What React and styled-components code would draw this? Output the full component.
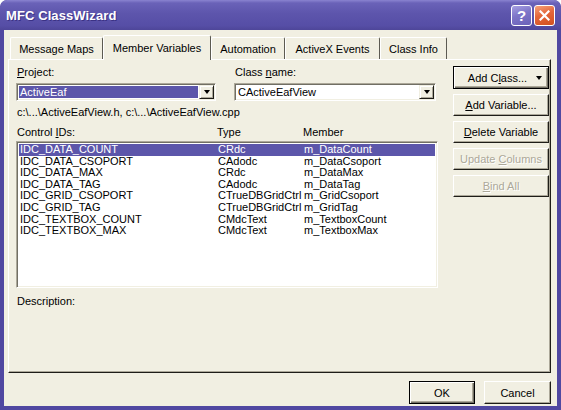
import React from "react";
import styled, { createGlobalStyle } from "styled-components";

const GlobalStyle = createGlobalStyle`
  html, body {
    margin: 0;
    padding: 0;
    background: #ffffff;
  }
  body {
    font-family: "Liberation Sans", Arial, sans-serif;
    font-size: 11px;
    color: #000;
  }
`;

const Window = styled.div`
  width: 561px;
  height: 410px;
  box-sizing: border-box;
  display: flex;
  flex-direction: column;
  padding: 0 4px 5px 4px;
  background: #5048a1;
  border-radius: 7px 7px 0 0;
  overflow: hidden;
`;

const TitleBar = styled.div`
  height: 30px;
  flex: none;
  margin: 0 -4px;
  padding: 0 6px 0 6px;
  display: flex;
  align-items: center;
  background: linear-gradient(
    180deg,
    #8a83d0 0%,
    #6a62b8 10%,
    #5d55ac 45%,
    #564ea6 85%,
    #4e4699 100%
  );
  border-radius: 7px 7px 0 0;
`;

const Title = styled.div`
  flex: 1;
  color: #fff;
  font-weight: bold;
  font-size: 13px;
  letter-spacing: 0.1px;
  text-shadow: 1px 1px 0 #3b3285;
`;

const CaptionButton = styled.div`
  width: 21px;
  height: 21px;
  box-sizing: border-box;
  margin-left: 2px;
  border: 1px solid #fff;
  border-radius: 3px;
  display: flex;
  align-items: center;
  justify-content: center;
  color: #fff;
  font-weight: bold;
  font-size: 15px;
  background: ${(p) =>
    p.$close
      ? "linear-gradient(160deg, #f6a27a 0%, #e4663a 45%, #d2501f 100%)"
      : "linear-gradient(160deg, #a7a0e2 0%, #7d75c8 45%, #6b62b8 100%)"};
`;

const Client = styled.div`
  flex: 1;
  display: flex;
  flex-direction: column;
  background: #f1efe2;
  padding: 5px 6px 2px 4px;
`;

const TabStrip = styled.div`
  height: 25px;
  flex: none;
  display: flex;
  align-items: flex-end;
  padding-left: 2px;
  position: relative;
  z-index: 1;
  margin-bottom: -1px;
`;

const Tab = styled.div`
  width: ${(p) => p.$w}px;
  height: ${(p) => (p.$active ? 25 : 22)}px;
  box-sizing: border-box;
  margin-bottom: ${(p) => (p.$active ? 0 : 1)}px;
  display: flex;
  align-items: center;
  justify-content: center;
  padding-bottom: ${(p) => (p.$active ? 1 : 0)}px;
  background: #f1efe2;
  border-top: 1px solid #fff;
  border-left: 1px solid #fff;
  border-right: 1px solid #5c5a52;
  border-radius: 2px 2px 0 0;
  white-space: nowrap;
`;

const TabPage = styled.div`
  height: 314px;
  flex: none;
  box-sizing: border-box;
  display: flex;
  gap: 15px;
  padding: 6px 1px 0 7px;
  border-top: 1px solid #fff;
  border-left: 1px solid #fff;
  border-right: 1px solid #1e1d18;
  border-bottom: 1px solid #1e1d18;
  box-shadow: inset -1px -1px 0 #aca899;
`;

const LeftPane = styled.div`
  width: 422px;
  display: flex;
  flex-direction: column;
`;

const FieldRow = styled.div`
  display: grid;
  grid-template-columns: 200px 202px;
  column-gap: 18px;
`;

const Field = styled.div`
  display: flex;
  flex-direction: column;
`;

const Label = styled.div`
  line-height: 13px;
  padding-left: 1px;
  margin-top: ${(p) => p.$top || 0}px;
  white-space: nowrap;
`;

const Combo = styled.div`
  height: 18px;
  margin-top: 4px;
  box-sizing: border-box;
  display: flex;
  border: 1px solid;
  border-color: #aca899 #fff #fff #aca899;
  box-shadow: inset 1px 1px 0 #716f64, inset -1px -1px 0 #f1efe2;
  background: #fff;
  padding: 2px 2px 2px 2px;
`;

const ComboText = styled.div`
  flex: 1;
  line-height: 12px;
  padding-left: 1px;
  margin-right: 1px;
  background: ${(p) => (p.$selected ? "#5c56aa" : "transparent")};
  color: ${(p) => (p.$selected ? "#fff" : "#000")};
  white-space: nowrap;
`;

const DropButton = styled.div`
  width: 15px;
  margin: -1px -1px -1px 0;
  box-sizing: border-box;
  display: flex;
  align-items: center;
  justify-content: center;
  background: #f1efe2;
  border: 1px solid;
  border-color: #f1efe2 #1e1d18 #1e1d18 #f1efe2;
  box-shadow: inset 1px 1px 0 #fff, inset -1px -1px 0 #aca899;
`;

const Arrow = styled.span`
  width: 0;
  height: 0;
  border-left: 3.5px solid transparent;
  border-right: 3.5px solid transparent;
  border-top: 4px solid ${(p) => (p.$disabled ? "#aca899" : "#000")};
`;

const ColumnGrid = styled.div`
  display: grid;
  grid-template-columns: ${(p) => p.$first}px 86px 1fr;
  white-space: nowrap;
`;

const HeaderRow = styled(ColumnGrid)`
  line-height: 13px;
  padding-left: 1px;
  margin-top: 7px;
`;

const ListBox = styled.div`
  height: 147px;
  margin-top: 2px;
  box-sizing: border-box;
  border: 1px solid;
  border-color: #aca899 #fff #fff #aca899;
  box-shadow: inset 1px 1px 0 #716f64, inset -1px -1px 0 #f1efe2;
  background: #fff;
  padding: 2px 2px 1px 2px;
  overflow: hidden;
`;

const ListRow = styled(ColumnGrid)`
  height: 11.6px;
  line-height: 11.6px;
  padding-left: 1px;
  background: ${(p) => (p.$selected ? "#5c56aa" : "transparent")};
  color: ${(p) => (p.$selected ? "#fff" : "#000")};
`;

const RightPane = styled.div`
  width: 96px;
  display: flex;
  flex-direction: column;
  gap: 5px;
`;

const PushButton = styled.div`
  width: ${(p) => p.$w || 96}px;
  height: ${(p) => p.$h || 22}px;
  box-sizing: border-box;
  display: flex;
  align-items: center;
  justify-content: center;
  gap: 9px;
  background: #f1efe2;
  border: 1px solid;
  border-color: ${(p) =>
    p.$default ? "#000" : "#fff #1e1d18 #1e1d18 #fff"};
  box-shadow: ${(p) =>
    p.$default
      ? "inset 1px 1px 0 #fff, inset -1px -1px 0 #716f64, inset -2px -2px 0 #aca899"
      : "inset -1px -1px 0 #aca899"};
  color: ${(p) => (p.$disabled ? "#aca899" : "#000")};
  text-shadow: ${(p) => (p.$disabled ? "1px 1px 0 #fff" : "none")};
  white-space: nowrap;
  padding-left: ${(p) => p.$padLeft || 0}px;
`;

const Footer = styled.div`
  display: flex;
  justify-content: flex-end;
  gap: 9px;
  padding-top: 8px;
`;

const tabs = [
  { name: "Message Maps", w: 93 },
  { name: "Member Variables", w: 108, active: true },
  { name: "Automation", w: 74 },
  { name: "ActiveX Events", w: 95 },
  { name: "Class Info", w: 67 },
];

const rows = [
  ["IDC_DATA_COUNT", "CRdc", "m_DataCount"],
  ["IDC_DATA_CSOPORT", "CAdodc", "m_DataCsoport"],
  ["IDC_DATA_MAX", "CRdc", "m_DataMax"],
  ["IDC_DATA_TAG", "CAdodc", "m_DataTag"],
  ["IDC_GRID_CSOPORT", "CTrueDBGridCtrl", "m_GridCsoport"],
  ["IDC_GRID_TAG", "CTrueDBGridCtrl", "m_GridTag"],
  ["IDC_TEXTBOX_COUNT", "CMdcText", "m_TextboxCount"],
  ["IDC_TEXTBOX_MAX", "CMdcText", "m_TextboxMax"],
];

export default function App() {
  return (
    <>
      <GlobalStyle />
      <Window>
        <TitleBar>
          <Title>MFC ClassWizard</Title>
          <CaptionButton>?</CaptionButton>
          <CaptionButton $close>
            <svg width="11" height="11" viewBox="0 0 11 11">
              <path
                d="M1.5 1.5 L9.5 9.5 M9.5 1.5 L1.5 9.5"
                stroke="#fff"
                strokeWidth="2.2"
                strokeLinecap="square"
              />
            </svg>
          </CaptionButton>
        </TitleBar>
        <Client>
          <TabStrip>
            {tabs.map((t) => (
              <Tab key={t.name} $w={t.w} $active={t.active}>
                {t.name}
              </Tab>
            ))}
          </TabStrip>
          <TabPage>
            <LeftPane>
              <FieldRow>
                <Field>
                  <Label>
                    <u>P</u>roject:
                  </Label>
                  <Combo>
                    <ComboText $selected>ActiveEaf</ComboText>
                    <DropButton>
                      <Arrow />
                    </DropButton>
                  </Combo>
                </Field>
                <Field>
                  <Label>
                    Class <u>n</u>ame:
                  </Label>
                  <Combo>
                    <ComboText>CActiveEafView</ComboText>
                    <DropButton>
                      <Arrow />
                    </DropButton>
                  </Combo>
                </Field>
              </FieldRow>
              <Label $top={5}>
                c:\...\ActiveEafView.h, c:\...\ActiveEafView.cpp
              </Label>
              <HeaderRow $first={200}>
                <span>
                  Control <u>I</u>Ds:
                </span>
                <span>Type</span>
                <span>Member</span>
              </HeaderRow>
              <ListBox>
                {rows.map((r, i) => (
                  <ListRow key={r[0]} $first={198} $selected={i === 0}>
                    <span>{r[0]}</span>
                    <span>{r[1]}</span>
                    <span>{r[2]}</span>
                  </ListRow>
                ))}
              </ListBox>
              <Label $top={7}>Description:</Label>
            </LeftPane>
            <RightPane>
              <PushButton $default $h={23} $padLeft={8}>
                <span>
                  Add C<u>l</u>ass...
                </span>
                <Arrow />
              </PushButton>
              <PushButton>
                <span>
                  <u>A</u>dd Variable...
                </span>
              </PushButton>
              <PushButton>
                <span>
                  <u>D</u>elete Variable
                </span>
              </PushButton>
              <PushButton $disabled>
                <span>
                  Update <u>C</u>olumns
                </span>
              </PushButton>
              <PushButton $disabled>
                <span>
                  <u>B</u>ind All
                </span>
              </PushButton>
            </RightPane>
          </TabPage>
          <Footer>
            <PushButton $default $w={66} $h={23}>
              OK
            </PushButton>
            <PushButton $w={67} $h={23}>
              Cancel
            </PushButton>
          </Footer>
        </Client>
      </Window>
    </>
  );
}
